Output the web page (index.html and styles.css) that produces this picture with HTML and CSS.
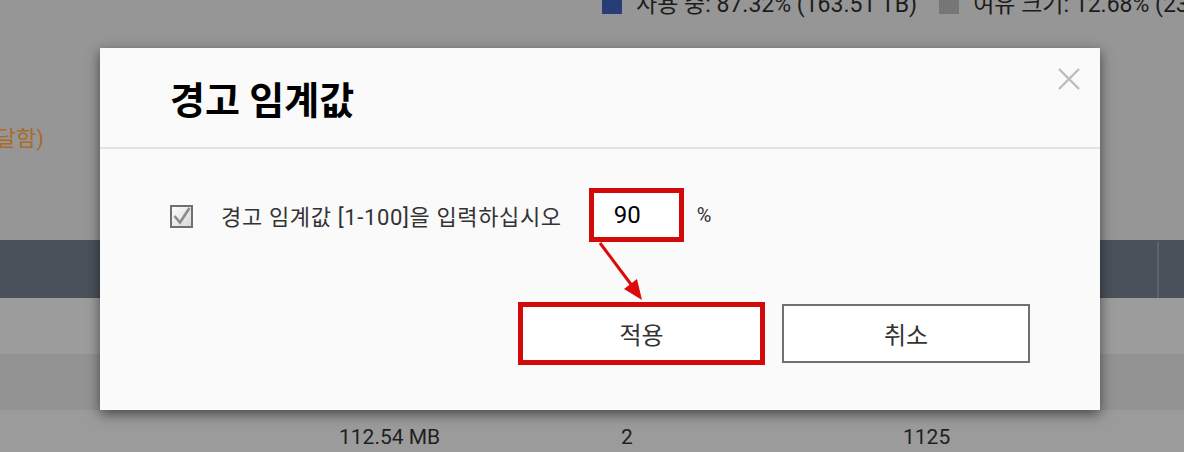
FILE: index.html
```html
<!DOCTYPE html>
<html lang="ko">
<head>
<meta charset="utf-8">
<title>경고 임계값</title>
<link rel="stylesheet" href="styles.css">
</head>
<body>
<div class="page">
  <div class="top-area">
    <div class="legend">
      <span class="swatch swatch-used"></span>
      <span class="legend-text">사용 중: 87.32% (163.51 TB)</span>
      <span class="swatch swatch-free"></span>
      <span class="legend-text">여유 크기: 12.68% (23.74 TB)</span>
    </div>
    <div class="warn-note"><span>(임계값에 도달함)</span></div>
  </div>
  <div class="thead"><span class="thead-sep"></span></div>
  <div class="trow trow-a"></div>
  <div class="trow trow-b"></div>
  <div class="trow trow-c">
    <span class="cell">112.54 MB</span>
    <span class="cell">2</span>
    <span class="cell">1125</span>
  </div>
</div>

<div class="dialog">
  <div class="dialog-head">
    <h1 class="dialog-title">경고 임계값</h1>
    <button class="close" aria-label="닫기">
      <svg width="22" height="22" viewBox="0 0 22 22"><path d="M1 1 L21 21 M21 1 L1 21" stroke="#bcbcbc" stroke-width="2.4" fill="none"/></svg>
    </button>
  </div>
  <div class="dialog-body">
    <div class="field-row">
      <span class="checkbox">
        <svg width="23" height="23" viewBox="0 0 23 23">
          <defs><linearGradient id="cg" x1="0" y1="0" x2="1" y2="1"><stop offset="0" stop-color="#ffffff"/><stop offset="1" stop-color="#d6d6d6"/></linearGradient></defs>
          <rect x="1" y="1" width="21" height="21" fill="url(#cg)" stroke="#707070" stroke-width="2"/>
          <path d="M4.5 11 L10 17.5 L19.5 3" fill="none" stroke="#8c8c8c" stroke-width="2.6"/>
        </svg>
      </span>
      <span class="field-label">경고 임계값 [1-100]을 입력하십시오</span>
      <span class="num-box">90</span>
      <span class="unit">%</span>
    </div>
    <div class="btn-row">
      <button class="btn btn-apply">적용</button>
      <button class="btn btn-cancel">취소</button>
    </div>
  </div>
</div>

<svg class="annot" width="1184" height="452" viewBox="0 0 1184 452">
  <line x1="600" y1="243" x2="633" y2="287" stroke="#dc0a0a" stroke-width="3"/>
  <polygon points="642,300 624,289 637,279" fill="#dc0a0a"/>
</svg>
</body>
</html>
```

FILE: styles.css
```css
html, body {
  margin: 0;
  padding: 0;
}
body {
  width: 1184px;
  height: 452px;
  overflow: hidden;
  position: relative;
  font-family: Roboto, "Noto Sans CJK KR", sans-serif;
  background: #9b9b9b;
}
.page {
  display: flex;
  flex-direction: column;
  width: 1184px;
  height: 452px;
  overflow: hidden;
}
.top-area {
  height: 240px;
  background: #969696;
  display: flex;
  flex-direction: column;
}
.legend {
  display: flex;
  align-items: center;
  margin-top: -6px;
  padding-left: 602px;
  height: 22px;
  white-space: nowrap;
  font-size: 23px;
  line-height: 22px;
  color: #1c1c1c;
}
.swatch {
  width: 20px;
  height: 20px;
  flex: none;
  margin-top: -2px;
}
.swatch-used { background: #283c78; margin-right: 14px; }
.swatch-free { background: #767676; margin-left: 22px; margin-right: 14px; }
.warn-note {
  margin-top: 110px;
  width: 44px;
  display: flex;
  justify-content: flex-end;
  white-space: nowrap;
  font-size: 22px;
  line-height: 26px;
  color: #a96a2c;
}
.thead {
  height: 58px;
  background: #4b515a;
  display: flex;
  padding-left: 1157px;
  box-sizing: border-box;
}
.thead-sep {
  width: 2px;
  margin-top: 2px;
  background: #5d636c;
}
.trow { height: 56px; }
.trow-a { background: #9c9c9c; }
.trow-b { background: #939393; }
.trow-c {
  flex: 1;
  background: #9b9b9b;
  display: grid;
  grid-template-columns: 339px 282px 282px auto;
  box-sizing: border-box;
  padding-top: 15px;
  font-size: 21px;
  line-height: 24px;
  color: #1f1f1f;
}
.trow-c .cell:first-child { grid-column: 2; }

.dialog {
  position: absolute;
  left: 100px;
  top: 48px;
  width: 1000px;
  height: 362px;
  background: #fafafa;
  box-shadow: 0 4px 12px rgba(0, 0, 0, 0.55);
  display: flex;
  flex-direction: column;
}
.dialog-head {
  height: 99px;
  border-bottom: 2px solid #e2e2e2;
  display: flex;
  align-items: center;
  justify-content: space-between;
  padding-left: 70px;
  padding-right: 20px;
}
.dialog-title {
  margin: 0;
  font-size: 38px;
  font-weight: 700;
  color: #000;
}
.close {
  align-self: flex-start;
  margin-top: 20px;
  width: 22px;
  height: 22px;
  padding: 0;
  border: 0;
  background: none;
  display: flex;
}
.dialog-body {
  flex: 1;
  display: flex;
  flex-direction: column;
  padding: 39px 70px 0 70px;
}
.field-row {
  display: flex;
  align-items: center;
  height: 54px;
}
.checkbox {
  display: flex;
  width: 23px;
  height: 23px;
  margin-top: 2px;
}
.field-label {
  margin-left: 28px;
  font-size: 22px;
  letter-spacing: 0.65px;
  color: #333;
  white-space: nowrap;
}
.num-box {
  margin-left: 27px;
  width: 95px;
  height: 54px;
  box-sizing: border-box;
  border: 5px solid #d20a0a;
  background: #fff;
  padding-left: 20px;
  display: flex;
  align-items: center;
  font-size: 24px;
  color: #000;
}
.unit {
  margin-left: 13px;
  font-size: 20px;
  color: #333;
}
.btn-row {
  margin-top: 60px;
  display: flex;
  justify-content: flex-end;
  align-items: center;
  gap: 17px;
}
.btn {
  font-family: Roboto, "Noto Sans CJK KR", sans-serif;
  font-size: 24px;
  color: #333;
  background: #fff;
  box-sizing: border-box;
  padding: 0;
  display: flex;
  align-items: center;
  justify-content: center;
}
.btn-apply {
  width: 247px;
  height: 63px;
  border: 5px solid #d20a0a;
}
.btn-cancel {
  width: 248px;
  height: 59px;
  border: 2px solid #707070;
}
.annot {
  position: absolute;
  left: 0;
  top: 0;
  pointer-events: none;
}
```
